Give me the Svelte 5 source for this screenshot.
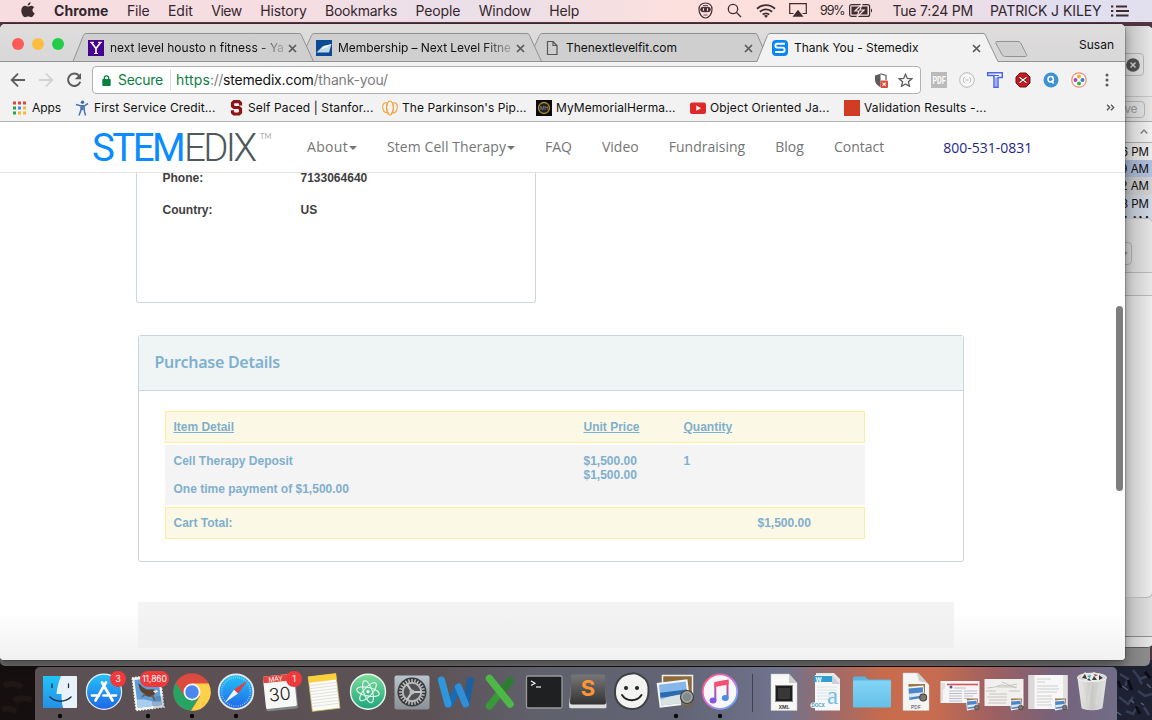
<script>
  // Tunes letter-spacing so that a label takes exactly the given width.
  function fit(node, width) {
    const natural = node.getBoundingClientRect().width;
    const count = node.textContent.length;
    node.style.letterSpacing = `${(width - natural) / count}px`;
  }

  const menus = [
    ['File', 22.5], ['Edit', 25], ['View', 30.5], ['History', 46.5],
    ['Bookmarks', 72], ['People', 45], ['Window', 52], ['Help', 30]
  ];

  const tabs = [
    { icon: 'yahoo', label: 'next level housto n fitness - Ya', width: 174, fade: true },
    { icon: 'nlf', label: 'Membership – Next Level Fitne', width: 173, fade: true },
    { icon: 'page', label: 'Thenextlevelfit.com', width: 111 },
    { icon: 'stemedix', label: 'Thank You - Stemedix', width: 124.5 }
  ];

  const bookmarks = [
    { icon: 'first', label: 'First Service Credit...', width: 121.5 },
    { icon: 'stanford', label: 'Self Paced | Stanfor...', width: 125.5 },
    { icon: 'parkinson', label: "The Parkinson's Pip...", width: 124.5 },
    { icon: 'memorial', label: 'MyMemorialHerma...', width: 119.5 },
    { icon: 'youtube', label: 'Object Oriented Ja...', width: 119.5 },
    { icon: 'validation', label: 'Validation Results -...', width: 122.5 }
  ];

  const nav = [
    { label: 'About', width: 41, caret: true },
    { label: 'Stem Cell Therapy', width: 119, caret: true },
    { label: 'FAQ', width: 27 },
    { label: 'Video', width: 36.7 },
    { label: 'Fundraising', width: 76.5 },
    { label: 'Blog', width: 28.7 },
    { label: 'Contact', width: 50.3 }
  ];

  const apps = [
    { name: 'finder', running: true },
    { name: 'appstore', badge: '3' },
    { name: 'mail', running: true, badge: '11,860' },
    { name: 'chrome', running: true },
    { name: 'safari', running: true },
    { name: 'calendar', badge: '1' },
    { name: 'notes' }, { name: 'atom' }, { name: 'prefs' }, { name: 'word' },
    { name: 'excel' }, { name: 'terminal' }, { name: 'sublime' }, { name: 'smile' },
    { name: 'preview', running: true },
    { name: 'itunes', running: true }
  ];
  const files = ['xml', 'docx', 'folder', 'pdf', 'doc1', 'doc2', 'doc3', 'trash'];
  const gearTeeth = Array.from({ length: 24 }, (_, i) => i * 15);
</script>

{#snippet previewBadge()}
  <rect x="1" y="0" width="11" height="9" fill="#9a7a4c" />
  <path d="M0 2l11-1 1 9-11 2z" fill="#f4f4f4" />
  <path d="M1 3l9.500-.8.6 7-9.500 1.400z" fill="#4c86c8" />
  <path d="M1.300 6.500l9.500-1 .3 2-9.500 1.500z" fill="#dce8f2" />
  <circle cx="10.800" cy="9" r="2.300" fill="#7d766e" stroke="#444" stroke-width=".7" />
{/snippet}

{#snippet dockArt(name)}
  {#if name === 'finder'}
    <rect x="5" y="9" width="34" height="32" rx="1" fill="#e9f2f9" />
    <path d="M6 9h17c-2.500 6-4 12-4.500 18h5c0 5 .5 10 1.500 14H6a1 1 0 0 1-1-1V10a1 1 0 0 1 1-1z" fill="url(#finderBlue)" />
    <path d="M14 17v3.500M30.500 17v3.500" stroke="#17324a" stroke-width="1.300" stroke-linecap="round" />
    <path d="M12 30c5.500 5.500 15 5.500 21 0" fill="none" stroke="#17324a" stroke-width="1.500" stroke-linecap="round" />
  {:else if name === 'appstore'}
    <circle cx="22" cy="24.700" r="17.600" fill="url(#storeBlue)" stroke="#edf1f4" stroke-width="1.200" />
    <g fill="none" stroke="#fff" stroke-width="2.700" stroke-linecap="round">
      <path d="M20 15.500l10.500 18M24 15.500l-10.500 18M10 28.500h7M21.500 28.500h4M30 28.500h4" />
    </g>
  {:else if name === 'mail'}
    <g transform="rotate(-7 22 25)">
      <rect x="8" y="9" width="28" height="33" fill="#f5f5f2" stroke="#f5f5f2" stroke-width="1.500" stroke-dasharray="1.500 1.500" />
      <rect x="10" y="11.500" width="24" height="28" fill="#5d9edb" />
      <path d="M10 31l8 1 8 3 8 1v3.500H10z" fill="#a9cdec" />
      <path d="M13.500 15c3 4 5 6 8 7.500l6 .5 4 3-3 1.500-2 2c-4 1-7 0-8-3-4-2-5-6-5-11.500z" fill="#594332" />
      <path d="M18 26l-4 4 6-2M24 29l4 6-.5-6.500" fill="#7d5d3c" />
      <path d="M27 24.500l4-.5 1 2-3 1z" fill="#efe7d8" />
    </g>
    <circle cx="33" cy="36" r="6.500" fill="#33425b" opacity=".2" stroke="#1f2a3b" />
  {:else if name === 'chrome'}
    <circle cx="22" cy="25" r="18.700" fill="#dc4a3f" />
    <path d="M5.800 15.700A18.700 18.700 0 0 0 21 43.700L29.400 29.300 14.600 29.300z" fill="#25a463" />
    <path d="M22 16.500H38.600A18.700 18.700 0 0 1 21 43.700L29.800 29.500z" fill="#fed14b" />
    <circle cx="22" cy="25" r="8.500" fill="#f4f4f2" /><circle cx="22" cy="25" r="6.700" fill="#4b87ee" />
  {:else if name === 'safari'}
    <circle cx="22" cy="24.700" r="17.300" fill="url(#storeBlue)" stroke="#e7e9ea" stroke-width="1.800" />
    <circle cx="22" cy="24.700" r="14.300" fill="none" stroke="#b9e4fa" stroke-width="1.600" stroke-dasharray=".6 1.600" />
    <path d="M33.500 13.500L24 26.500 20 22.800z" fill="#eb3b34" /><path d="M10.500 36L20 22.800 24 26.500z" fill="#f3f3f3" />
  {:else if name === 'calendar'}
    <g transform="rotate(-6 22 25)">
      <rect x="6.500" y="10" width="32" height="33" rx="2" fill="#7e8688" />
      <rect x="6.500" y="8" width="31" height="32.500" rx="1.500" fill="#f8f8f7" />
      <path d="M8 8h28a1.500 1.500 0 0 1 1.500 1.500V14.500h-31V9.500A1.500 1.500 0 0 1 8 8z" fill="#e04640" />
      <text x="19" y="13.800" class="caltop">MAY</text>
      <text x="21.500" y="33.500" class="calday">30</text>
    </g>
  {:else if name === 'notes'}
    <g transform="rotate(-7 22 25)">
      <rect x="8" y="8" width="28" height="35" fill="#fbfbf7" stroke="#bda643" stroke-width=".7" />
      <rect x="8" y="8" width="28" height="6" fill="#fbcf39" />
      <path d="M8 17h28M8 20h28M8 23h28M8 26h28M8 29h28M8 32h28M8 35h28M8 38h28" stroke="#dbdbda" stroke-width=".8" />
    </g>
  {:else if name === 'atom'}
    <circle cx="22" cy="24.700" r="17.500" fill="url(#atomGreen)" stroke="#e9f5ee" stroke-width="1.400" />
    <g fill="none" stroke="#e1f7eb" stroke-width="1.100">
      <ellipse cx="22" cy="24.700" rx="11.500" ry="4.300" transform="rotate(12 22 24.700)" />
      <ellipse cx="22" cy="24.700" rx="11.500" ry="4.300" transform="rotate(72 22 24.700)" />
      <ellipse cx="22" cy="24.700" rx="11.500" ry="4.300" transform="rotate(132 22 24.700)" />
    </g><circle cx="22" cy="24.700" r="1.600" fill="#fff" />
  {:else if name === 'prefs'}
    <rect x="4.500" y="8.500" width="35" height="34" rx="2" fill="url(#steel)" />
    <circle cx="22" cy="25" r="14.500" fill="#3a3b3d" />
    {#each gearTeeth as angle}
      <path d="M22 12v3" stroke="#c3c5c6" stroke-width="1.400" transform="rotate({angle} 22 25)" />
    {/each}
    <circle cx="22" cy="25" r="9.300" fill="#515254" stroke="#b7b9ba" stroke-width="2" />
    <path d="M22 25l-5-8M22 25h9M22 25l-5 8" stroke="#c8c9ca" stroke-width="2.200" />
    <circle cx="22" cy="25" r="2.500" fill="#bbb" />
  {:else if name === 'word'}
    <g fill="none" stroke-linecap="round" stroke-width="7">
      <path d="M36.500 13.500L32 37" stroke="#1d5f9f" />
      <path d="M24 20L16 37" stroke="#1c6bb0" /><path d="M7.500 13L14 37" stroke="#2f96dc" />
      <path d="M24.500 20l7 17" stroke="#2f8ed6" />
    </g>
  {:else if name === 'excel'}
    <g fill="none" stroke-linecap="round" stroke-width="7.500">
      <path d="M32 14L23 25" stroke="#2b7e30" /><path d="M21 27L11.500 39" stroke="#38983a" />
      <path d="M11.500 11.500L32 37" stroke="#4db848" />
    </g>
  {:else if name === 'terminal'}
    <rect x="4.500" y="9" width="35.500" height="32" rx="1.500" fill="#1f2021" stroke="#9b9b9b" stroke-width="1.300" />
    <path d="M9 14l4 2.300-4 2.300" fill="none" stroke="#f4f4f4" stroke-width="1.200" /><path d="M14 20h5" stroke="#f4f4f4" stroke-width="1.200" />
  {:else if name === 'sublime'}
    <path d="M6 8.500h32l2.500 30.500a2 2 0 0 1-2 2.300H5a2 2 0 0 1-2-2z" fill="#dededd" />
    <path d="M7 7.500h30a2 2 0 0 1 2 2l1 26a2 2 0 0 1-2 2H6a2 2 0 0 1-2-2L5 9.500a2 2 0 0 1 2-2z" fill="url(#subDark)" />
    <text x="22" y="28.500" class="subs">S</text>
  {:else if name === 'smile'}
    <path d="M22 6.500c5-1 8 2 10 3 5 3 7 9 6.500 15 0 9-6 17.500-16 17.500-11 0-18-7.500-17.500-17.500C5 15 11 7 22 6.500z" fill="#f3f3f2" stroke="#3f4144" stroke-width="2" />
    <circle cx="16" cy="21" r="2" fill="#222" /><circle cx="27" cy="21" r="2" fill="#222" />
    <path d="M12 28c4.500 7 15 7 19.500 0" fill="none" stroke="#222" stroke-width="2" stroke-linecap="round" />
  {:else if name === 'preview'}
    <rect x="8.500" y="8.500" width="30" height="24" fill="#8d6b3c" stroke="#f0eee8" stroke-width="1.500" />
    <g transform="rotate(-7 20 26)">
      <rect x="4" y="14" width="31" height="25" fill="#f6f6f6" /><rect x="6" y="16" width="27" height="21" fill="#85b8e8" />
      <path d="M6 24h27v5H6z" fill="#2c6cae" /><path d="M6 31c8-3 18-2 27-4v10H6z" fill="#d9e1e2" />
    </g>
    <path d="M27 29c1-4 12-4 13 0v9c-2 4-11 4-13 0z" fill="#6e6559" opacity=".9" />
    <circle cx="33" cy="30" r="6.500" fill="#a6a69c" stroke="#3d3d3d" stroke-width="1.200" /><circle cx="33" cy="30" r="4.300" fill="#7e8b8f" />
  {:else if name === 'itunes'}
    <circle cx="22" cy="24.700" r="17.300" fill="#f8f6fa" stroke="url(#tunesRing)" stroke-width="1.900" />
    <path d="M17.300 33V16.300L29.500 14v16.500" fill="none" stroke="url(#tunesNote)" stroke-width="2" />
    <path d="M16.500 15l14-2.500v5l-14 2.500z" fill="#f64f70" />
    <ellipse cx="15" cy="33.500" rx="3.500" ry="3" fill="#8659dc" /><ellipse cx="27.300" cy="31" rx="3.500" ry="3" fill="#4a8de5" />
  {:else if name === 'xml'}
    <path d="M9 7h18l8 9v27.500H9z" fill="#f7f7f6" stroke="#c9c9c9" stroke-width=".5" /><path d="M27 7v9h8z" fill="#cdcdcd" />
    <rect x="13.500" y="18.500" width="17" height="16" fill="#1e1e1e" stroke="#888" /><rect x="16" y="21" width="12" height="11" fill="#383838" />
    <text x="22" y="41.500" class="ext">XML</text>
  {:else if name === 'docx'}
    <path d="M10 6h18l6 6v31H10z" fill="#e5e7e8" /><path d="M9 8h17l8 9v26.500H9z" fill="#f5f7f8" /><path d="M26 8v9h8z" fill="#cdd2d6" />
    <path d="M8 9h18v6H8z" fill="#2f9fd1" /><text x="12.500" y="14.500" class="tinyw">W</text>
    <path d="M11 20h20M11 23h20M11 26h20M11 29h20M11 32h20" stroke="#d3dde2" stroke-width=".8" />
    <text x="26.500" y="36.500" class="biga">a</text>
    <rect x="4.500" y="35.500" width="15.500" height="5.500" rx="2.700" fill="#fff" /><text x="12.200" y="40" class="docx">DOCX</text>
  {:else if name === 'folder'}
    <path d="M3 11a1.500 1.500 0 0 1 1.500-1.500H15l3 3h22.500A1.500 1.500 0 0 1 41 14v3H3z" fill="#56b6e0" />
    <rect x="3" y="13.500" width="38" height="27" rx="1.200" fill="url(#folderBlue)" />
  {:else if name === 'pdf'}
    <path d="M9 6h15l11 12v25.500H9z" fill="#f5f5f4" stroke="#ccc" stroke-width=".5" /><path d="M22 6c3 3 2 7 3 8 3 1 8 1 10 4L24 6z" fill="#cfcfcf" />
    <g transform="translate(13 17) scale(1.500)">{@render previewBadge()}</g>
    <text x="22" y="41.500" class="ext thin">PDF</text>
  {:else if name === 'doc1'}
    <rect x="2.500" y="14" width="39" height="22" fill="#f6f4f4" /><path d="M9 17.500h31" stroke="#d65358" stroke-width="1.600" />
    <circle cx="13" cy="20" r="1.500" fill="#465e95" />
    <path d="M16 21h12M11 24h13M11 26.500h13M11 29h13M11 31.500h13M11 34h13M26 24h13M26 26.500h13M26 29h9M26 31.500h5" stroke="#b6b8c9" stroke-width=".9" />
    <path d="M4 16v18M6 16v6" stroke="#ccc" /><g transform="translate(28 31.500)">{@render previewBadge()}</g>
  {:else if name === 'doc2'}
    <rect x="2.500" y="12" width="39" height="27" fill="#f2f0ee" />
    <path d="M5 21l8-1 6-2 7 1 9-2M4 24h10M7 27h18M5 30h20M7 33h18M6 36h18M20 15l14 6M15 20h20M27 24h11" stroke="#c2beb8" stroke-width=".9" fill="none" />
    <g transform="translate(28 31.500)">{@render previewBadge()}</g>
  {:else if name === 'doc3'}
    <rect x="2.500" y="8" width="39" height="34" fill="#f7f7f7" /><rect x="2.500" y="8" width="6" height="34" fill="#dadada" /><rect x="37" y="8" width="4.500" height="34" fill="#e2e2e2" />
    <path d="M11 12h14M11 15h8M11 19h21M11 22h22M11 25h20M11 29h15M11 32h16M11 35h14M11 38h15" stroke="#c5c5c5" stroke-width=".8" />
    <g transform="translate(28 31.500)">{@render previewBadge()}</g>
  {:else if name === 'trash'}
    <path d="M7.500 11h29l-4 30c-3 3-18 3-21 0z" fill="url(#trashGrey)" />
    <ellipse cx="22" cy="10.500" rx="14.500" ry="4.300" fill="#d5d5d4" stroke="#f2f2f2" />
    <path d="M11 10l4-5 4 3 5-3 4 2 4 2 2 3-7 3-12-1z" fill="#e9e9e7" />
    <path d="M12 11l3-4 2 5zM22 13l2-4 3 4zM29 8l4 3-4 2zM17 13l2-2 2 3z" fill="#3b3b3d" /><path d="M17 9l4-1-1 3z" fill="#35a9a0" /><path d="M24 7l4 1-3 1.500z" fill="#b5473c" />
    <path d="M12 19l4 17M21 17l-3 22M30 18l-4 20" stroke="#fafafa" stroke-width="1.500" opacity=".2" />
  {/if}
{/snippet}

<div class="desktop">
  <svg class="wall" width="1152" height="60" viewBox="0 0 1152 60">
    <rect width="1152" height="60" fill="#15100f" /><rect x="1080" width="72" height="60" fill="#1d2132" />
    <path d="M4 26c6-4 14-2 18 1M14 41c5-4 12-3 18-1M2 50c6-3 10-1 14 1" stroke="#1e1716" stroke-width="6" fill="none" />
    <path d="M1120 14l8 5-3 7M1133 10l7 9 8-3M1119 37l9 7 5-7M1138 31l7 5 7-2M1126 51l7 3 5-9M1144 47l5 8M1139 19l3 5" stroke="#363e55" stroke-width="2.500" fill="none" />
    <path d="M1122 26l6 4M1131 40l3 3M1147 24l4 4M1117 52l4 3M1141 43l3 2" stroke="#555f79" stroke-width="1.500" />
    <path d="M1128 20l4 10M1145 12l5 6M1136 46l4 8M1118 21l3 7" stroke="#0b0d15" stroke-width="3" />
  </svg>

  <header class="menubar">
    <svg class="apple" width="14" height="16" viewBox="0 0 14 16"><path d="M9.600.2c.1 1.700-1.300 3.200-2.900 3.200C6.500 1.800 8 .3 9.600.2zM7 4.500c.8 0 1.700-.8 3.200-.8 1.200 0 2.300.6 3 1.600-2.600 1.600-2.100 5 .5 6-.6 1.600-2 4-3.500 4-1.100 0-1.600-.7-3-.7s-2 .7-3 .7C2.400 15.300.3 12 .3 8.600c0-3.200 2-4.900 3.900-4.900 1.200 0 2.200.8 2.800.8z" fill="#3f2c30" /></svg>
    <strong class="appname"><span use:fit={54.5}>Chrome</span></strong>
    <nav class="menus">{#each menus as [label, width]}<span use:fit={width}>{label}</span>{/each}</nav>
    <div class="status">
      <svg width="15" height="17" viewBox="0 0 15 17" fill="none" stroke="#3f2c30"><path d="M7.500 1C3.500 1 1 3.300 1 7.500S4 16 7.500 16 14 11.700 14 7.500 11.500 1 7.500 1z" stroke-width="1.200" /><path d="M5 3.500h5M5.500 13h4" stroke-width=".8" /><rect x="2.700" y="5.300" width="9.600" height="4.400" rx="2.200" fill="#3f2c30" /><path d="M5.500 6.300v2.400M9.500 6.300v2.400" stroke="#f8dfe0" stroke-width="1.200" /></svg>
      <svg class="i2" width="15" height="15" viewBox="0 0 15 15" fill="none" stroke="#3f2c30" stroke-width="1.300"><circle cx="6" cy="6" r="4.700" /><path d="M9.500 9.500l4.500 4.500" /></svg>
      <svg class="i3" width="20" height="14" viewBox="0 0 20 14" fill="none" stroke="#3f2c30" stroke-width="1.900"><path d="M1 4.800C6-.1 14-.1 19 4.800M3.900 7.800c3.300-3.200 8.900-3.200 12.200 0M6.800 10.600c1.700-1.700 4.700-1.700 6.400 0" /><path d="M10 14l-2-2.200c1.200-1 2.800-1 4 0z" fill="#3f2c30" stroke="none" /></svg>
      <svg class="i4" width="18" height="15" viewBox="0 0 18 15"><path d="M4.500 10.500H.7V.7h16.600v9.800h-3.800" fill="none" stroke="#3f2c30" stroke-width="1.200" /><path d="M9 6.800l5.500 7h-11z" fill="#3f2c30" /></svg>
      <span class="pct"><span use:fit={24.5}>99%</span></span>
      <svg class="i5" width="24" height="13" viewBox="0 0 24 13"><rect x=".6" y=".6" width="20" height="11.800" rx="2" fill="none" stroke="#3f2c30" stroke-width="1.200" /><rect x="2.500" y="2.500" width="16" height="8" fill="#3f2c30" /><path d="M22 4.500c1.500.5 1.500 3.500 0 4z" fill="#3f2c30" /><path d="M13 0L6 7h4l-2 6 7-7h-4z" fill="#3f2c30" stroke="#fbe1df" stroke-width="1.200" /></svg>
      <span class="clock"><span use:fit={80.5}>Tue 7:24 PM</span></span>
      <span class="user"><span use:fit={111.5}>PATRICK J KILEY</span></span>
      <svg class="i6" width="19" height="12" viewBox="0 0 19 12" stroke="#3f2c30" stroke-width="1.800"><path d="M0 1.500h2.300M0 6h2.300M0 10.500h2.300M5 1.500h11M5 6h13M5 10.500h12.500" /></svg>
    </div>
  </header>

  <div class="win rear"></div>
  <div class="win finder">
    <div class="ftop"><div class="search"><svg width="14" height="14" viewBox="0 0 14 14"><circle cx="7" cy="7" r="6.800" fill="#5b5b5b" /><path d="M4.500 4.500l5 5M9.500 4.500l-5 5" stroke="#eee" stroke-width="1.400" /></svg></div></div>
    <div class="fsave"><span>ve</span></div>
    <div class="fhead"><svg width="8" height="5" viewBox="0 0 8 5"><path d="M.7 4.500L4 1l3.300 3.500" fill="none" stroke="#777" stroke-width="1.100" /></svg></div>
    <div class="frow">6 PM</div><div class="frow sel">9 AM</div><div class="frow grey">2 AM</div><div class="frow pale">8 PM</div><div class="frow pale">1 AM</div>
    <div class="ffoot"></div>
  </div>
  <div class="win sheet"><div class="stop"><div class="sbtn"><svg width="6" height="4" viewBox="0 0 6 4"><path d="M0 0h6L3 3.500z" fill="#aaa" /></svg></div></div><div class="sbar"></div></div>

  <main class="win browser">
    <div class="tabstrip">
      <svg class="shapes" width="1125" height="38" viewBox="0 0 1125 38">
        <g fill="#cfcfcf" stroke="#929292">
          <path d="M529 37.500l5-14 5-11c.6-1.500 1.500-3 3-3H755c1.500 0 2.500 1 3 3l11 25z" />
          <path d="M301 37.500l5-14 5-11c.6-1.500 1.500-3 3-3H527c1.500 0 2.500 1 3 3l11.500 25z" />
          <path d="M73 37.500l10-25c.6-1.500 1.500-3 3-3H299c1.500 0 2.500 1 3 3l11.500 25z" />
        </g>
        <path d="M0 37.500h757l10-25c.6-1.500 1.500-3 3-3h213c1.500 0 2.500 1 3 3l12 25h127v3H0z" fill="#f2f2f2" />
        <path d="M0 37.500h757l10-25c.6-1.500 1.500-3 3-3h213c1.500 0 2.500 1 3 3l12 25h127" fill="none" stroke="#929292" />
        <path d="M997 17.500h21c1.500 0 2.500.8 3 2l5.500 11c.6 1.300 0 2-1 2h-20c-1.500 0-3-.8-3.500-2l-6-11c-.5-1.300 0-2 1-2z" fill="#cfcfcf" stroke="#929292" />
      </svg>
      <div class="lights"><i class="red"></i><i class="amber"></i><i class="green"></i></div>
      <div class="tabs">
        {#each tabs as tab}
          <div class="tab">
            <svg width="16" height="16" viewBox="0 0 16 16">
              {#if tab.icon === 'yahoo'}<rect width="16" height="16" fill="#48008f" /><path d="M3.500 2.500L8 8.500l4.500-6M8 8v5.500" fill="none" stroke="#fff" stroke-width="1.700" /><path d="M2 2.300h4M10 2.300h4M6 13.500h4" stroke="#fff" />
              {:else if tab.icon === 'nlf'}<rect width="16" height="16" fill="#0b4b96" /><path d="M.5 12.500L7 6l8.500-2L13 12.500z" fill="#c5d8ea" /><path d="M4 9.500L9 6l6.500-2-4.500 3.500z" fill="#f0f5fa" />
              {:else if tab.icon === 'page'}<path d="M3.500 1.500h5.500l4 4v9h-9.500zM9 1.500v4h4" fill="none" stroke="#555" stroke-width="1.200" />
              {:else}<rect width="16" height="16" rx="4" fill="#0a86f4" /><path d="M13 3.700H5.200c-1.400 0-1.800.6-1.800 1.900 0 1.400.5 2 1.800 2h5.500c1.400 0 1.900.6 1.900 2.100 0 1.700-.5 2.300-1.900 2.300H3" fill="none" stroke="#fff" stroke-width="1.900" />{/if}
            </svg>
            <div class="tlabel" class:fade={tab.fade}><span use:fit={tab.width}>{tab.label}</span></div>
            <svg class="close" width="9" height="9" viewBox="0 0 9 9"><path d="M1 1l7 7M8 1L1 8" stroke="#5a5a5a" stroke-width="1.700" /></svg>
          </div>
        {/each}
      </div>
      <div class="profile"><span use:fit={35}>Susan</span></div>
    </div>

    <div class="toolbar">
      <svg class="navicons" width="84" height="20" viewBox="0 0 84 20" fill="none" stroke="#5c5c5c" stroke-width="1.800">
        <path d="M25 10H12M18 3.700L11.700 10l6.300 6.300" /><path d="M39 10h13M46 3.700l6.300 6.300-6.300 6.300" stroke="#d3d3d3" />
        <path d="M79 5.700a6.200 6.200 0 1 0 1.200 6" stroke-width="2" /><path d="M81 3v6.300h-6.300z" fill="#5c5c5c" stroke="none" />
      </svg>
      <div class="omnibox">
        <svg width="9" height="11" viewBox="0 0 9 11"><rect x=".3" y="4" width="8.400" height="7" rx=".8" fill="#0b8043" /><path d="M2.300 4.500V3a2.200 2.200 0 0 1 4.400 0v1.500" fill="none" stroke="#0b8043" stroke-width="1.300" /></svg>
        <span class="secure"><span use:fit={45}>Secure</span></span><i class="vsep"></i>
        <span class="url"><span use:fit={34}><b>https</b></span><span use:fit={13}>://</span><em use:fit={90.5}>stemedix.com</em><span use:fit={74.500}>/thank-you/</span></span>
        <svg class="shield" width="14" height="15" viewBox="0 0 14 15"><path d="M6.500.7L1 2.500v4C1 10 3.500 13 6.500 14z" fill="#5c5c5c" /><path d="M6.500.7L12 2.500V7" fill="none" stroke="#5c5c5c" stroke-width="1.200" /><rect x="6.500" y="7.500" width="7.500" height="7.500" rx="1" fill="#dd4b39" /><path d="M8.600 9.600l3.300 3.300M11.900 9.600l-3.300 3.300" stroke="#fff" stroke-width="1.100" /></svg>
        <svg class="star" width="15" height="14" viewBox="0 0 15 14"><path d="M7.500 1.200l1.800 4.200 4.600.4-3.500 3 1.100 4.500-4-2.400-4 2.400 1.100-4.500-3.500-3 4.600-.4z" fill="none" stroke="#5c5c5c" stroke-width="1.300" /></svg>
      </div>
      <div class="exts">
        <svg width="16" height="16" viewBox="0 0 16 16"><rect width="16" height="16" fill="#bababa" /><g transform="translate(8 12) scale(.9 1.250)"><text class="pdfx">PDF</text></g></svg>
        <svg width="16" height="16" viewBox="0 0 16 16"><circle cx="8" cy="8" r="7.300" fill="#f7f7f7" stroke="#b9b9b9" /><path d="M5.500 5.500c-1.300 0-.8 1.700-1 2L4 8l.5.500c.2.300-.3 2 1 2M10.500 5.500c1.300 0 .8 1.700 1 2l.5.500-.5.500c-.2.300.3 2-1 2M6.500 8h3" fill="none" stroke="#b0b0b0" stroke-width=".9" /></svg>
        <svg width="16" height="16" viewBox="0 0 16 16"><path d="M.7 3.500V.8h14.600v4.700H11v9.700H7V3.500z" fill="#f5f7ff" stroke="#4c65e6" stroke-width="1.500" /><path d="M4 3.500h8M9 5.500v9" stroke="#4c65e6" stroke-width="1" /></svg>
        <svg width="16" height="16" viewBox="0 0 16 16"><path d="M5 1h6l4 4v6l-4 4H5l-4-4V5z" fill="#c91620" stroke="#65171b" /><path d="M4.500 5.300l7 5.400M11.500 5.300l-7 5.400" stroke="#222" stroke-width="2.300" /><path d="M4.500 5.300l7 5.400M11.500 5.300l-7 5.400" stroke="#fff" stroke-width="1.100" /></svg>
        <svg width="16" height="16" viewBox="0 0 16 16"><circle cx="8" cy="8" r="7.500" fill="#3c92d3" /><circle cx="7.700" cy="7.200" r="2.700" fill="none" stroke="#fff" stroke-width="1.500" /><path d="M8.500 8.500l2 3" stroke="#fff" stroke-width="1.500" /></svg>
        <svg width="16" height="16" viewBox="0 0 16 16"><circle cx="8" cy="8" r="7.200" fill="#fff" stroke="#ee8b78" stroke-width="1.200" /><circle cx="8" cy="4.500" r="2" fill="#f3b02f" /><circle cx="4.500" cy="8" r="2" fill="#a949b4" /><circle cx="11.500" cy="8" r="2" fill="#2f84c5" /><circle cx="8" cy="11.500" r="2" fill="#46ab4d" /></svg>
        <svg width="16" height="16" viewBox="0 0 16 16" fill="#5c5c5c"><circle cx="8" cy="3" r="1.500" /><circle cx="8" cy="8" r="1.500" /><circle cx="8" cy="13" r="1.500" /></svg>
      </div>
    </div>

    <div class="bookmarks">
      <div class="bm appsbm">
        <svg width="16" height="16" viewBox="0 0 16 16"><path d="M1 1.500h3V4.500H1zM6 1.500h3V4.500H6zM11 1.500h3V4.500H11z" fill="#e0443b" /><path d="M1 6.500h3V9.500H1zM1 11.500h3V14.500H1z" fill="#2ba24c" /><path d="M6 6.500h3V9.500H6z" fill="#4285f4" /><path d="M11 6.500h3V9.500H11zM6 11.500h3V14.500H6zM11 11.500h3V14.500H11z" fill="#f5b82e" /></svg>
        <span use:fit={29}>Apps</span>
      </div>
      {#each bookmarks as b}
        <div class="bm">
          <svg width="16" height="16" viewBox="0 0 16 16">
            {#if b.icon === 'first'}<circle cx="8.500" cy="2.200" r="1.700" fill="#3e68b0" /><path d="M2 4.500l4.500 1.300h4L14 3.500M8.500 6v4M7 6.500c1 3-1 6-2 9M10 6.500c0 3 .500 6 1.500 9" stroke="#4a73b8" stroke-width="1.500" fill="none" />
            {:else if b.icon === 'stanford'}<path d="M12.500 5.500V3.200L11 1.700H6L4.500 3.200V6L6 7.500h5L12.500 9v3.500L11 14H6l-1.500-1.500v-2.200" fill="none" stroke="#8c1515" stroke-width="3.200" />
            {:else if b.icon === 'parkinson'}<g fill="none" stroke="#f1a43c" stroke-width="1.100"><ellipse cx="8" cy="8" rx="3.300" ry="7" /><path d="M5.500 13C2 13 .7 10 .7 7S2 2 5.500 3M10.500 13c3.500 0 4.800-3 4.800-6s-1.300-5-4.800-4M5.500 3c-2 3-1 8 1.300 11M10.500 3c2 3 1 8-1.300 11" /></g>
            {:else if b.icon === 'memorial'}<rect width="16" height="16" fill="#0b0b0c" /><circle cx="8" cy="8" r="5.500" fill="#222" stroke="#b38a2d" stroke-width="1.300" /><text x="8" y="9.800" class="mh">MH</text>
            {:else if b.icon === 'youtube'}<rect y="2.500" width="16" height="11.500" rx="2" fill="#e02a2a" /><path d="M6.300 5.600v5.200L11 8.200z" fill="#fff" />
            {:else}<rect width="16" height="16" fill="#d23c24" />{/if}
          </svg>
          <span use:fit={b.width}>{b.label}</span>
        </div>
      {/each}
      <svg class="more" width="9" height="7" viewBox="0 0 9 7"><path d="M1 .7L3.700 3.500 1 6.300M5 .7l2.700 2.800L5 6.300" fill="none" stroke="#5c5c5c" stroke-width="1.400" /></svg>
    </div>

    <div class="page">
      <div class="sitenav">
        <div class="logo"><b use:fit={91}>STEM</b><span use:fit={70.5}>EDIX</span></div><sup>TM</sup>
        <nav>
          {#each nav as item}
            <div class="navitem"><span use:fit={item.width}>{item.label}</span>{#if item.caret}<i class="caret"></i>{/if}</div>
          {/each}
        </nav>
        <span class="phone"><span use:fit={89}>800-531-0831</span></span>
      </div>
      <div class="contact">
        <div class="pair"><span>Phone:</span><span>7133064640</span></div>
        <div class="pair"><span>Country:</span><span>US</span></div>
      </div>
      <section class="purchase">
        <h2><span use:fit={125.5}>Purchase Details</span></h2>
        <div class="table">
          <div class="tr head"><u use:fit={60.5}>Item Detail</u><u use:fit={56}>Unit Price</u><u use:fit={48.7}>Quantity</u></div>
          <div class="tr item"><div>Cell Therapy Deposit<br /><br />One time payment of $1,500.00</div><div>$1,500.00<br />$1,500.00</div><div>1</div></div>
          <div class="tr total"><div>Cart Total:</div><div>$1,500.00</div></div>
        </div>
      </section>
      <div class="block"></div>
      <div class="scroll"></div>
    </div>
  </main>

  <footer class="dock">
    <svg width="0" height="0" class="defs">
      <defs>
        <linearGradient id="finderBlue" x2="0" y2="1"><stop stop-color="#21c3f8" /><stop offset="1" stop-color="#2590e5" /></linearGradient>
        <linearGradient id="storeBlue" x2="0" y2="1"><stop stop-color="#26c4f8" /><stop offset="1" stop-color="#1e66e6" /></linearGradient>
        <linearGradient id="atomGreen" x2="0" y2="1"><stop stop-color="#7fdc9b" /><stop offset="1" stop-color="#1ea57e" /></linearGradient>
        <linearGradient id="steel" x2="0" y2="1"><stop stop-color="#b8c4cb" /><stop offset="1" stop-color="#8a9095" /></linearGradient>
        <linearGradient id="subDark" x2="0" y2="1"><stop stop-color="#777" /><stop offset="1" stop-color="#333" /></linearGradient>
        <linearGradient id="folderBlue" x2="0" y2="1"><stop stop-color="#82d5f8" /><stop offset="1" stop-color="#65bfe7" /></linearGradient>
        <linearGradient id="trashGrey"><stop stop-color="#e9e9e8" /><stop offset=".5" stop-color="#c8c8c7" /><stop offset="1" stop-color="#e3e3e2" /></linearGradient>
        <linearGradient id="tunesRing" x2="1" y2="1"><stop stop-color="#f55a6e" /><stop offset=".5" stop-color="#d76fe0" /><stop offset="1" stop-color="#43bdf3" /></linearGradient>
        <linearGradient id="tunesNote" x2="0" y2="1"><stop stop-color="#f54d6d" /><stop offset="1" stop-color="#7260df" /></linearGradient>
      </defs>
    </svg>
    {#each apps as app}
      <div class="dockitem">
        <svg width="44" height="53" viewBox="0 0 44 53">{@render dockArt(app.name)}{#if app.running}<circle cx="22" cy="49" r="2.200" fill="#0a0a0a" />{/if}</svg>
        {#if app.badge}<span class="badge" class:wide={app.badge.length > 1}>{app.badge}</span>{/if}
      </div>
    {/each}
    <i class="divider"></i>
    {#each files as file}
      <div class="dockitem"><svg width="44" height="53" viewBox="0 0 44 53">{@render dockArt(file)}</svg></div>
    {/each}
  </footer>
</div>

<style>
  :global(body) { margin: 0; overflow: hidden; }
  .desktop { position: relative; width: 1152px; height: 720px; overflow: hidden; background: #4e3441; font-family: Inter, "Liberation Sans", sans-serif; color: #111; }
  .desktop :global(svg) { display: block; flex: none; }
  span, em, u, b { white-space: pre; }
  .wall { position: absolute; left: 0; bottom: 0; }
  .menubar { position: relative; display: flex; align-items: center; height: 20px; box-sizing: content-box; padding-bottom: 2px; border-bottom: 1px solid #5b3541; background: linear-gradient(90deg, #f7dde0 0, #f5dde2 25%, #ebdfe9 38%, #ecdfe7 45%, #fce0de 58%, #fde0dc 68%, #f3dde0 78%, #e1def0 92%, #e2e0ef); font-size: 14px; color: #33262c; }
  .apple { margin: -1px 0 0 21px; }
  .appname { margin-left: 19px; width: 54.5px; font-weight: 700; }
  .menus { display: flex; gap: 18.4px; margin-left: 18.5px; }
  .status { position: absolute; left: 698px; top: 0; height: 21px; display: flex; align-items: center; }
  .i2 { margin-left: 14px; } .i3 { margin-left: 14px; } .i4 { margin-left: 13px; }
  .pct { margin-left: 13px; font-size: 12.5px; } .i5 { margin-left: 4px; }
  .clock { margin-left: 20px; } .user { margin-left: 17px; } .i6 { margin-left: 9.5px; }

  .win { position: absolute; box-sizing: border-box; overflow: hidden; }
  .rear { left: 0; top: 27px; width: 1150px; height: 639px; border-radius: 5px; background: linear-gradient(90deg, #6d6d6d 0, #6d6d6d 1100px, #8c8c8c); }
  .finder { left: 900px; top: 26px; width: 253px; height: 622px; border-radius: 6px; background: #ededed; border-bottom: 1px solid #555; display: flex; flex-direction: column; font-size: 12px; }
  .finder::after, .sheet::after { content: ""; position: absolute; top: 0; bottom: 0; left: 225px; width: 30px; background: linear-gradient(90deg, rgba(0,0,0,.22), rgba(0,0,0,.04)); }
  .ftop { height: 70px; background: #f5f5f5; border-bottom: 1px solid #d2d2d2; display: flex; justify-content: flex-end; align-items: flex-start; flex: none; }
  .search { width: 160px; height: 21px; margin: 27px 9px 0 0; border: 1px solid #c7c7c7; border-radius: 4px; display: flex; justify-content: flex-end; align-items: center; }
  .search :global(svg) { margin-right: 3px; }
  .fsave { height: 24px; border-bottom: 1px solid #b5b5b5; display: flex; justify-content: flex-end; align-items: center; flex: none; background: #f3f3f3; }
  .fsave span { border: 1px solid #c5c5c5; border-radius: 4px; padding: 0 7px 0 20px; margin: 0 8px 0 0; height: 15px; line-height: 14px; color: #aaa; font-size: 12px; letter-spacing: -.4px; }
  .fhead { height: 20px; border-bottom: 1px solid #bbb; background: #fff; display: flex; justify-content: flex-end; align-items: center; flex: none; }
  .fhead :global(svg) { margin: -2px 5px 0 0; }
  .frow { height: 17.2px; line-height: 19px; flex: none; background: #fafafa; text-align: right; padding-right: 4px; font-size: 11.5px; }
  .frow.sel { background: #bccbea; } .frow.grey { background: #ddd; } .frow.pale { background: #dce4f0; }
  .ffoot { margin-top: auto; height: 10px; border-top: 1px solid #999; background: #f5f5f5; }
  .sheet { left: 900px; top: 218px; width: 253px; height: 380px; border: 1px solid #b5b5b5; border-left: 0; border-radius: 6px; background: #fbfbfb; }
  .stop { height: 53px; background: #f1f1f1; border-bottom: 1px solid #c6c6c6; display: flex; justify-content: flex-end; }
  .sbtn { width: 40px; height: 21px; border: 1px solid #c6c6c6; border-radius: 4px; margin: 23px 20px 0 0; display: flex; align-items: center; justify-content: flex-end; }
  .sbtn :global(svg) { margin-right: 3px; }
  .sbar { height: 22px; border-bottom: 1px solid #c6c6c6; background: #f6f6f6; }

  .browser { left: 0; top: 24px; width: 1125px; height: 636px; border-radius: 5px 5px 4px 4px; background: #fff; display: flex; flex-direction: column; box-shadow: 0 0 0 .5px rgba(0,0,0,.35), 0 5px 9px rgba(0,0,0,.32); }
  .tabstrip { position: relative; height: 38px; flex: none; display: flex; background: linear-gradient(#dfdcdc, #d8d8d8); }
  .shapes { position: absolute; left: 0; top: 0; }
  .lights { position: relative; display: flex; gap: 8px; padding: 14px 0 0 12px; width: 76px; }
  .lights i { width: 12px; height: 12px; border-radius: 50%; }
  .red { background: #fc5b57; } .amber { background: #fdbd3e; } .green { background: #22cd4a; }
  .tabs { position: relative; display: grid; grid-template-columns: repeat(4, 228px); height: 32px; margin-top: 8px; }
  .tab { display: flex; align-items: center; font-size: 12px; color: #111; }
  .tlabel { width: 175px; margin: -1px 0 0 6px; overflow: hidden; }
  .tlabel.fade { -webkit-mask-image: linear-gradient(90deg, #000 145px, rgba(0,0,0,.15) 175px); mask-image: linear-gradient(90deg, #000 145px, rgba(0,0,0,.15) 175px); }
  .close { margin: 0 0 0 3px; }
  .profile { position: relative; margin: 13px 0 0 79px; font-size: 12px; }
  .toolbar { display: flex; align-items: center; height: 36px; flex: none; background: #f2f2f2; }
  .omnibox { box-sizing: border-box; width: 829px; height: 28px; margin-left: 8px; border: 1px solid #b2b2b2; border-radius: 4px; background: #fff; display: flex; align-items: center; padding-left: 9px; font-size: 14px; }
  .secure { margin: -2px 0 0 7px; color: #0b8043; } .vsep { width: 1px; height: 20px; background: #ddd; margin: 0 5px 0 7px; }
  .url { color: #7d7d7d; display: flex; width: 698px; margin-top: -2px; } .url b { font-weight: 400; color: #0b8043; } .url em { font-style: normal; color: #111; }
  .star { margin: 0 7px 0 10px; }
  .exts { display: flex; gap: 12px; margin-left: 10px; }
  .bookmarks { display: flex; align-items: center; height: 24px; flex: none; box-sizing: border-box; border-bottom: 1px solid #b3b3b3; background: #f2f2f2; padding: 0 0 4px 12px; font-size: 12px; }
  .bm { display: flex; align-items: center; gap: 4px; width: 154px; height: 16px; flex: none; } .appsbm { width: 62px; }
  .more { margin-left: 108px; }
  .page { position: relative; flex: 1; background: linear-gradient(#fff 0, #fff 490px, #f1f1f1 538px); font-family: "Liberation Sans", Arial, sans-serif; }
  .sitenav { display: flex; align-items: center; height: 51px; box-sizing: border-box; border-bottom: 1px solid #e5e5e5; padding-left: 92px; font-family: "Open Sans", sans-serif; font-size: 14px; color: #757575; }
  .logo { display: flex; width: 166px; height: 50px; line-height: 52px; font-family: Roboto, sans-serif; font-size: 38.5px; font-weight: 300; color: #50585c; }
  .logo b { font-weight: 400; color: #0b8bff; margin-right: 1px; } .logo span { font-weight: 300; }
  sup { width: 14px; margin: -21px 0 0 2px; font: 7.5px Lato, sans-serif; color: #aaa; }
  .sitenav nav { display: flex; gap: 30px; margin: -2px 0 0 33px; }
  .navitem { display: flex; align-items: center; }
  .caret { width: 0; height: 0; margin: 3px 0 0 1px; border: 4px solid transparent; border-top-color: #757575; border-bottom: 0; }
  .phone { margin: 1px 0 0 59px; color: #26268a; }
  .contact { box-sizing: border-box; width: 400px; height: 130px; margin-left: 136px; border: 1px solid #cbd8df; border-top: 0; border-radius: 0 0 3px 3px; padding-left: 25.5px; font-size: 12px; font-weight: 700; color: #3e3e3e; }
  .pair { display: grid; grid-template-columns: 138px auto; height: 32px; line-height: 10px; }
  .purchase { box-sizing: border-box; margin: 32px 0 0 138px; width: 826px; height: 227px; border: 1px solid #c9d7dd; border-radius: 3px; }
  h2 { margin: 0; height: 54px; background: #eff5f5; border-bottom: 1px solid #c9d7dd; padding-left: 15.5px; font: 600 16px/52px "Noto Sans", sans-serif; color: #7fb0cf; }
  .table { display: grid; gap: 2px; grid-template-rows: 32px 60px 32px; width: 700px; margin: 20px 0 0 26px; font-size: 12px; font-weight: 700; line-height: 14px; color: #7fafcd; }
  .tr { display: grid; grid-template-columns: 410px 100px auto; box-sizing: border-box; padding-left: 7.5px; border: 1px solid #fdee9c; background: #fbf9e6; }
  .tr u { justify-self: start; align-self: center; }
  .tr.item { background: #f4f4f4; border-color: #f4f4f4; padding-top: 8px; }
  .total { grid-template-columns: 584px auto; align-items: center; }
  .block { width: 816px; height: 46px; margin: 40px 0 0 138px; background: linear-gradient(#f4f4f4, #efefef); }
  .scroll { position: absolute; right: 2px; top: 184px; width: 7px; height: 185px; border-radius: 4px; background: #7e7e7e; }

  .dock { position: absolute; left: 35px; top: 667px; width: 1082px; height: 53px; box-sizing: border-box; padding-left: 3px; display: flex; border-radius: 5px 5px 0 0; background: linear-gradient(90deg, #5b5053 0, #5c5255 390px, #60616d 510px, #626475 640px, #70748d 750px, #a06a67 800px, #c86b4d 850px, #c76c50 900px, #9c6062 960px, #76627a 1020px, #716d87); }
  .defs { position: absolute; }
  .dockitem { position: relative; width: 44px; height: 53px; flex: none; }
  .badge { position: absolute; left: 28px; top: 4px; min-width: 16px; height: 16px; line-height: 16px; border-radius: 8px; background: #f1393b; color: #fff; font-size: 9px; text-align: center; }
  .badge.wide { left: 14px; width: 29px; font-size: 8.5px; letter-spacing: -.1px; }
  .divider { width: 1px; height: 38px; margin: 7px 9px 0 10px; background: #41434f; }
  text { text-anchor: middle; }
  .caltop { font: 6.5px Inter, sans-serif; fill: #fff; } .calday { font: 300 18px Inter, sans-serif; fill: #222; }
  .subs { font: 700 22px Inter, sans-serif; fill: #ff9532; }
  .ext { font: 700 5px Inter, sans-serif; fill: #444; } .thin { font-weight: 400; }
  .tinyw { font: 700 6px Inter, sans-serif; fill: #fff; } .biga { font: 25px "Liberation Serif", serif; fill: #77bfe0; }
  .docx { font: 700 4.5px Inter, sans-serif; fill: #3a8fb8; } .pdfx { font: 700 8px Roboto, sans-serif; fill: #fff; } .mh { font: 5px Inter, sans-serif; fill: #999; }
</style>
